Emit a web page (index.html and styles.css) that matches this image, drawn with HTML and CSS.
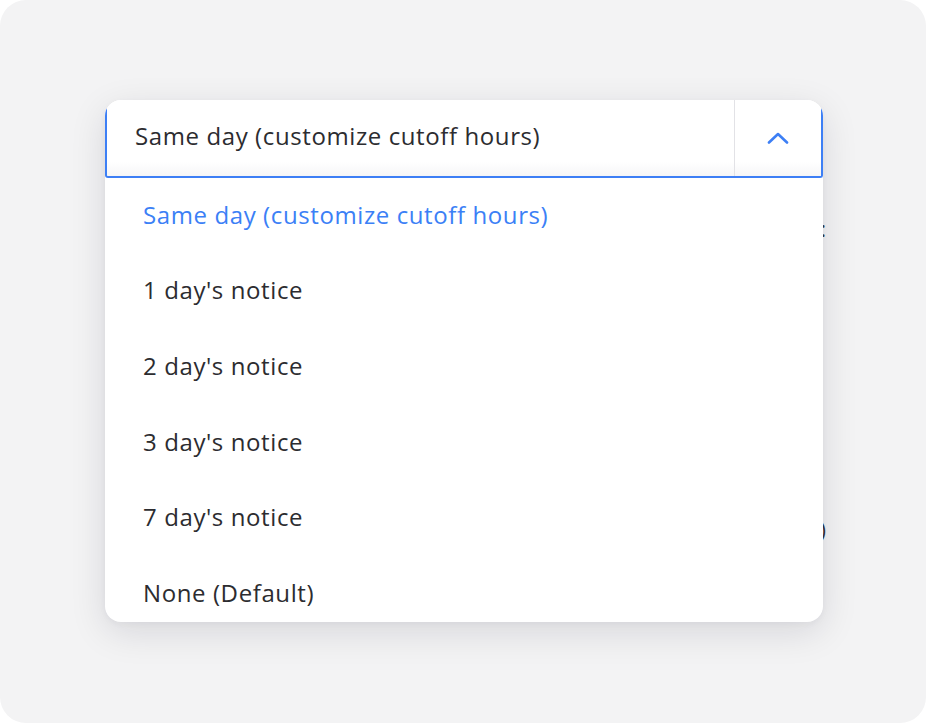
FILE: index.html
```html
<!DOCTYPE html>
<html lang="en">
<head>
<meta charset="utf-8">
<title>Notice dropdown</title>
<link rel="stylesheet" href="styles.css">
</head>
<body>
<div class="canvas">
  <div class="backdrop">
    <div class="bg-line bg-line-1">Cutoff:</div>
    <div class="bg-line bg-line-2">(optional)</div>
  </div>
  <div class="panel">
    <div class="select">
      <div class="select-value">Same day (customize cutoff hours)</div>
      <div class="select-toggle">
        <svg width="22" height="12" viewBox="0 0 22 12" fill="none">
          <path d="M2 10.5 L11 2 L20 10.5" stroke="#3d7ff5" stroke-width="2.6" stroke-linecap="round" stroke-linejoin="round"/>
        </svg>
      </div>
    </div>
    <ul class="options">
      <li class="option active">Same day (customize cutoff hours)</li>
      <li class="option">1 day's notice</li>
      <li class="option">2 day's notice</li>
      <li class="option">3 day's notice</li>
      <li class="option">7 day's notice</li>
      <li class="option">None (Default)</li>
    </ul>
  </div>
</div>
</body>
</html>
```
FILE: styles.css
```css
html, body {
  margin: 0;
  padding: 0;
  background: #ffffff;
}
.canvas {
  position: relative;
  width: 926px;
  height: 723px;
  box-sizing: border-box;
  background: #f3f3f4;
  border-radius: 26px;
  padding: 100px 103px 0 105px;
  font-family: "Open Sans", "Noto Sans", sans-serif;
  color: #2c2c30;
}
.backdrop {
  position: absolute;
  left: 0;
  top: 0;
  width: 826px;
}
.bg-line {
  position: absolute;
  right: 0;
  font-size: 22px;
  color: #333;
}
.bg-line-1 { top: 213px; }
.bg-line-2 { top: 514px; }
.panel {
  position: relative;
  z-index: 1;
  height: 522px;
  background: #fff;
  border-radius: 16px;
  overflow: hidden;
  box-shadow: 0 10px 36px rgba(20, 20, 40, 0.12), 0 2px 6px rgba(20, 20, 40, 0.04);
}
.select {
  display: flex;
  margin-top: -4px;
  height: 82px;
  box-sizing: border-box;
  border: 2px solid #3d7ff5;
  border-top: none;
  border-radius: 0 0 3px 3px;
  background: linear-gradient(to bottom, #ffffff 82%, #f6f6f7 100%);
}
.select-value {
  flex: 1;
  display: flex;
  align-items: center;
  padding: 0 0 2px 28px;
  font-size: 24px;
  letter-spacing: 0.6px;
  color: #2c2c30;
}
.select-toggle {
  width: 86px;
  display: flex;
  align-items: center;
  justify-content: center;
  padding-top: 4px;
  border-left: 1.5px solid #e2e2e6;
}
.options {
  list-style: none;
  margin: 0;
  padding: 0;
}
.option {
  height: 75.6px;
  box-sizing: border-box;
  display: flex;
  align-items: center;
  padding: 0 0 3px 38px;
  font-size: 24px;
  letter-spacing: 0.6px;
  color: #2c2c30;
}
.option.active {
  color: #3b80f6;
}
```
